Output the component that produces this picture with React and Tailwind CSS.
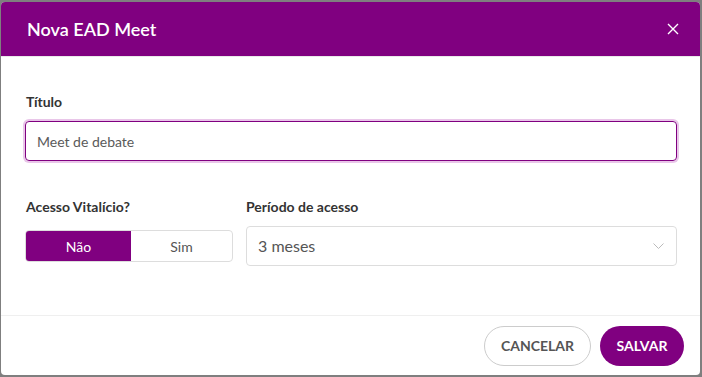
import React from "react";

export default function App() {
  return (
    <div className="w-[702px] h-[377px] bg-[#7f7f7f] pt-[2px] pl-[1px] font-['Lato',sans-serif] overflow-hidden">
      <div className="w-[699px] h-[373px] bg-white rounded-[4px] overflow-hidden flex flex-col">
        <div className="h-[54px] bg-[#800080] flex items-center justify-between pl-[26px] pr-[21px] border-b border-[#e9e9e9] box-content">
          <h1 className="text-white text-[18px] font-semibold">Nova EAD Meet</h1>
          <svg width="12" height="12" viewBox="0 0 12 12" className="text-white">
            <path d="M1 1L11 11M11 1L1 11" stroke="currentColor" strokeWidth="1.4" />
          </svg>
        </div>
        <div className="flex-1 pl-[24px] pr-[23px] pt-[36px]">
          <label className="block text-[14px] font-bold text-[#333] leading-[17px] mb-[11px] ml-[1px]">Título</label>
          <div className="h-[40px] rounded-[4px] border-[1.5px] border-[#800080] ring-[2px] ring-[#e9c6e9] flex items-center px-[11px] text-[14px] text-[#5a5a5a]">
            Meet de debate
          </div>
          <div className="flex gap-[13px] mt-[37px]">
            <div className="w-[208px]">
              <div className="text-[14px] font-bold text-[#333] leading-[17px] ml-[1px]">Acesso Vitalício?</div>
              <div className="flex h-[32px] mt-[15px] rounded-[4px] overflow-hidden border border-[#ddd]">
                <div className="w-[105px] bg-[#800080] text-white text-[14px] flex items-center justify-center">Não</div>
                <div className="flex-1 text-[#555] text-[14px] flex items-center justify-center">Sim</div>
              </div>
            </div>
            <div className="flex-1">
              <div className="text-[14px] font-bold text-[#333] leading-[17px]">Período de acesso</div>
              <div className="h-[40px] mt-[11px] rounded-[4px] border border-[#ddd] flex items-center justify-between pl-[11px] pr-[12px] text-[16px] text-[#555]">
                <span>3 meses</span>
                <svg width="11" height="7" viewBox="0 0 11 7">
                  <path d="M0.5 0.5L5.5 5.5L10.5 0.5" stroke="#bbb" strokeWidth="1" fill="none" />
                </svg>
              </div>
            </div>
          </div>
        </div>
        <div className="h-[60px] border-t border-[#efefef] flex items-center justify-end gap-[9px] pr-[16px]">
          <button className="h-[40px] w-[107px] rounded-full border border-[#ccc] text-[14px] font-bold text-[#555]">CANCELAR</button>
          <button className="h-[40px] w-[84px] rounded-full bg-[#800080] text-[14px] font-bold text-white">SALVAR</button>
        </div>
      </div>
    </div>
  );
}
